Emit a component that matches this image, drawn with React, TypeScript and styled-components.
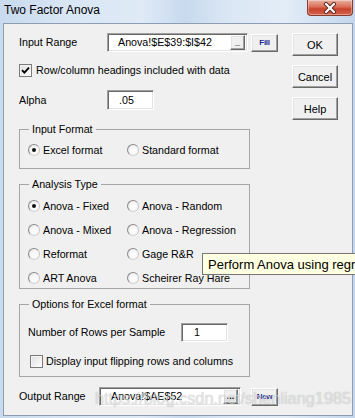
import React from "react";
import styled, { createGlobalStyle, css } from "styled-components";

const GlobalStyle = createGlobalStyle`
  html, body {
    margin: 0;
    padding: 0;
    overflow: hidden;
    background: #c6d6ea;
  }
  * { box-sizing: border-box; }
`;

const Window = styled.div`
  position: relative;
  width: 355px;
  height: 418px;
  display: flex;
  flex-direction: column;
  overflow: hidden;
  font-family: "Liberation Sans", Arial, sans-serif;
  background: linear-gradient(
    90deg,
    #c9daee 0%,
    #d9e6f4 20%,
    #dfeaf6 40%,
    #c8d9ee 52%,
    #dbe7f4 65%,
    #e3edf8 80%,
    #c4d6ec 100%
  );
`;

const TitleBar = styled.div`
  height: 23px;
  display: flex;
  justify-content: space-between;
  align-items: flex-start;
`;

const Title = styled.span`
  margin: 3px 0 0 4px;
  font-size: 12px;
  line-height: 15px;
  color: #000;
`;

const CloseButton = styled.div`
  width: 46px;
  height: 16px;
  margin-right: 2px;
  display: flex;
  align-items: center;
  justify-content: center;
  border: 1px solid #8b3b2c;
  border-top: none;
  border-radius: 0 0 4px 4px;
  background: linear-gradient(#eab2a3 0%, #dc6f58 45%, #c8432b 60%, #d3654c 100%);
  box-shadow: inset 0 0 0 1px rgba(255, 255, 255, 0.35);
`;

const Client = styled.div`
  flex: 1;
  margin: 0 2px 2px 3px;
  border: 1px solid #8d9db3;
  background: #f0f0f0;
  display: flex;
  align-items: flex-start;
  padding: 9px 0 0 15px;
`;

const MainColumn = styled.div`
  width: 262px;
  display: flex;
  flex-direction: column;
  font-size: 10.7px;
  color: #000;
`;

const SideColumn = styled.div`
  margin-left: 11px;
  display: flex;
  flex-direction: column;
  gap: 9px;
`;

const Row = styled.div<{ $top?: number; $left?: number }>`
  display: flex;
  align-items: center;
  margin-top: ${(p) => p.$top ?? 0}px;
  padding-left: ${(p) => p.$left ?? 0}px;
`;

const Label = styled.span<{ $width: number }>`
  width: ${(p) => p.$width}px;
  flex: none;
  line-height: 13px;
  white-space: nowrap;
`;

const sunken = css`
  background: #fff;
  border: 1px solid;
  border-color: #a0a0a0 #ffffff #ffffff #a0a0a0;
  box-shadow: inset 1px 1px 0 #696969, inset -1px -1px 0 #e3e3e3;
`;

const raised = css`
  background: #f0f0f0;
  border: 1px solid;
  border-color: #ffffff #696969 #696969 #ffffff;
  box-shadow: inset -1px -1px 0 #a0a0a0, inset 1px 1px 0 #e3e3e3;
`;

const TextBox = styled.div<{ $width: number; $height: number; $pad: number }>`
  ${sunken};
  width: ${(p) => p.$width}px;
  height: ${(p) => p.$height}px;
  flex: none;
  display: flex;
  align-items: center;
  padding: 0 2px 0 ${(p) => p.$pad}px;
  white-space: nowrap;
`;

const BoxText = styled.span`
  flex: 1;
  line-height: 13px;
`;

const DropButton = styled.div`
  ${raised};
  width: 15px;
  height: 15px;
  flex: none;
  display: flex;
  align-items: flex-end;
  justify-content: center;
  font-size: 9px;
  font-weight: bold;
  line-height: 10px;
  padding-bottom: 2px;
`;

const SmallButton = styled.div<{ $gap: number }>`
  ${raised};
  margin-left: ${(p) => p.$gap}px;
  width: 27px;
  height: 18px;
  flex: none;
  display: flex;
  align-items: center;
  justify-content: center;
  font-size: 8px;
  font-weight: bold;
  letter-spacing: -0.3px;
  color: #1c2890;
`;

const DialogButton = styled.div`
  ${raised};
  width: 46px;
  height: 23px;
  display: flex;
  align-items: center;
  justify-content: center;
  font-size: 11px;
  color: #000;
`;

const Check = styled.span`
  width: 13px;
  height: 13px;
  flex: none;
  border: 1px solid #7b7b7b;
  background: linear-gradient(135deg, #dedede, #ffffff);
  box-shadow: inset 1px 1px 0 #f4f4f4;
  display: flex;
  align-items: center;
  justify-content: center;
`;

const Option = styled.label<{ $gap: number }>`
  display: flex;
  align-items: center;
  gap: ${(p) => p.$gap}px;
  line-height: 14px;
  white-space: nowrap;
`;

const Radio = styled.span<{ $on?: boolean }>`
  width: 12px;
  height: 12px;
  flex: none;
  border-radius: 50%;
  border: 1px solid #8a8a8a;
  border-right-color: #c9c9c9;
  border-bottom-color: #d4d4d4;
  background: radial-gradient(circle at 60% 60%, #ffffff 0%, #f4f4f4 55%, #d8d8d8 100%);
  display: flex;
  align-items: center;
  justify-content: center;
  &::after {
    content: "";
    width: 4px;
    height: 4px;
    border-radius: 50%;
    background: ${(p) => (p.$on ? "#111" : "transparent")};
  }
`;

const Group = styled.fieldset<{ $top: number }>`
  width: 231px;
  margin: ${(p) => p.$top}px 0 0 0;
  padding: 0;
  border: 1px solid #a6a6a6;
  min-inline-size: 0;
`;

const Legend = styled.legend`
  margin-left: 9px;
  padding: 0 3px;
  font-size: 10.7px;
  line-height: 13px;
`;

const OptionGrid = styled.div<{ $top: number; $bottom: number }>`
  display: grid;
  grid-template-columns: 99px 1fr;
  row-gap: 10px;
  padding: ${(p) => p.$top}px 0 ${(p) => p.$bottom}px 8px;
`;

const OptionsBody = styled.div`
  padding: 12px 0 8px 8px;
`;

const Tooltip = styled.div`
  position: absolute;
  left: 202px;
  top: 253px;
  height: 22px;
  padding: 0 6px 0 5px;
  display: flex;
  align-items: center;
  white-space: nowrap;
  background: #ffffe1;
  border: 1px solid #767676;
  font-size: 13px;
  color: #000;
`;

const Watermark = styled.div`
  position: absolute;
  left: 95px;
  top: 389px;
  font-size: 16.5px;
  letter-spacing: -0.1px;
  color: rgba(255, 255, 255, 0.62);
  text-shadow: 0 0 1px rgba(0, 0, 0, 0.32);
  white-space: nowrap;
  pointer-events: none;
`;

const CheckMark = () => (
  <svg width="9" height="9" viewBox="0 0 9 9">
    <path d="M1 4.2 L3.4 6.6 L8 1.6" fill="none" stroke="#000" strokeWidth="1.9" />
  </svg>
);

const CloseIcon = () => (
  <svg width="14" height="12" viewBox="0 0 14 12">
    <path d="M3 2 L11 10 M11 2 L3 10" stroke="#5a2a22" strokeWidth="4" strokeLinecap="round" />
    <path d="M3 2 L11 10 M11 2 L3 10" stroke="#fff" strokeWidth="2.2" strokeLinecap="round" />
  </svg>
);

const analysisTypes: [string, boolean][] = [
  ["Anova - Fixed", true],
  ["Anova - Random", false],
  ["Anova - Mixed", false],
  ["Anova - Regression", false],
  ["Reformat", false],
  ["Gage R&R", false],
  ["ART Anova", false],
  ["Scheirer Ray Hare", false],
];

export default function App() {
  return (
    <>
      <GlobalStyle />
      <Window>
        <TitleBar>
          <Title>Two Factor Anova</Title>
          <CloseButton>
            <CloseIcon />
          </CloseButton>
        </TitleBar>
        <Client>
          <MainColumn>
            <Row>
              <Label $width={88}>Input Range</Label>
              <TextBox $width={141} $height={19} $pad={10}>
                <BoxText>Anova!$E$39:$I$42</BoxText>
                <DropButton>_</DropButton>
              </TextBox>
              <SmallButton $gap={3}>Fill</SmallButton>
            </Row>

            <Row $top={11}>
              <Option $gap={4}>
                <Check>
                  <CheckMark />
                </Check>
                Row/column headings included with data
              </Option>
            </Row>

            <Row $top={13}>
              <Label $width={88}>Alpha</Label>
              <TextBox $width={47} $height={20} $pad={11}>
                <BoxText>.05</BoxText>
              </TextBox>
            </Row>

            <Group $top={13}>
              <Legend>Input Format</Legend>
              <OptionGrid $top={7} $bottom={11}>
                <Option $gap={3}>
                  <Radio $on />
                  Excel format
                </Option>
                <Option $gap={3}>
                  <Radio />
                  Standard format
                </Option>
              </OptionGrid>
            </Group>

            <Group $top={9}>
              <Legend>Analysis Type</Legend>
              <OptionGrid $top={8} $bottom={3}>
                {analysisTypes.map(([name, on]) => (
                  <Option key={name} $gap={3}>
                    <Radio $on={on} />
                    {name}
                  </Option>
                ))}
              </OptionGrid>
            </Group>

            <Group $top={9}>
              <Legend>Options for Excel format</Legend>
              <OptionsBody>
                <Row>
                  <Label $width={153}>Number of Rows per Sample</Label>
                  <TextBox $width={47} $height={19} $pad={12}>
                    <BoxText>1</BoxText>
                  </TextBox>
                </Row>
                <Row $top={12} $left={2}>
                  <Option $gap={3}>
                    <Check />
                    Display input flipping rows and columns
                  </Option>
                </Row>
              </OptionsBody>
            </Group>

            <Row $top={10}>
              <Label $width={80}>Output Range</Label>
              <TextBox $width={142} $height={19} $pad={11}>
                <BoxText>Anova!$AE$52</BoxText>
                <DropButton>...</DropButton>
              </TextBox>
              <SmallButton $gap={10}>New</SmallButton>
            </Row>
          </MainColumn>

          <SideColumn>
            <DialogButton>OK</DialogButton>
            <DialogButton>Cancel</DialogButton>
            <DialogButton>Help</DialogButton>
          </SideColumn>
        </Client>

        <Tooltip>Perform Anova using regression</Tooltip>
        <Watermark>https://blog.csdn.net/shenliang1985</Watermark>
      </Window>
    </>
  );
}
